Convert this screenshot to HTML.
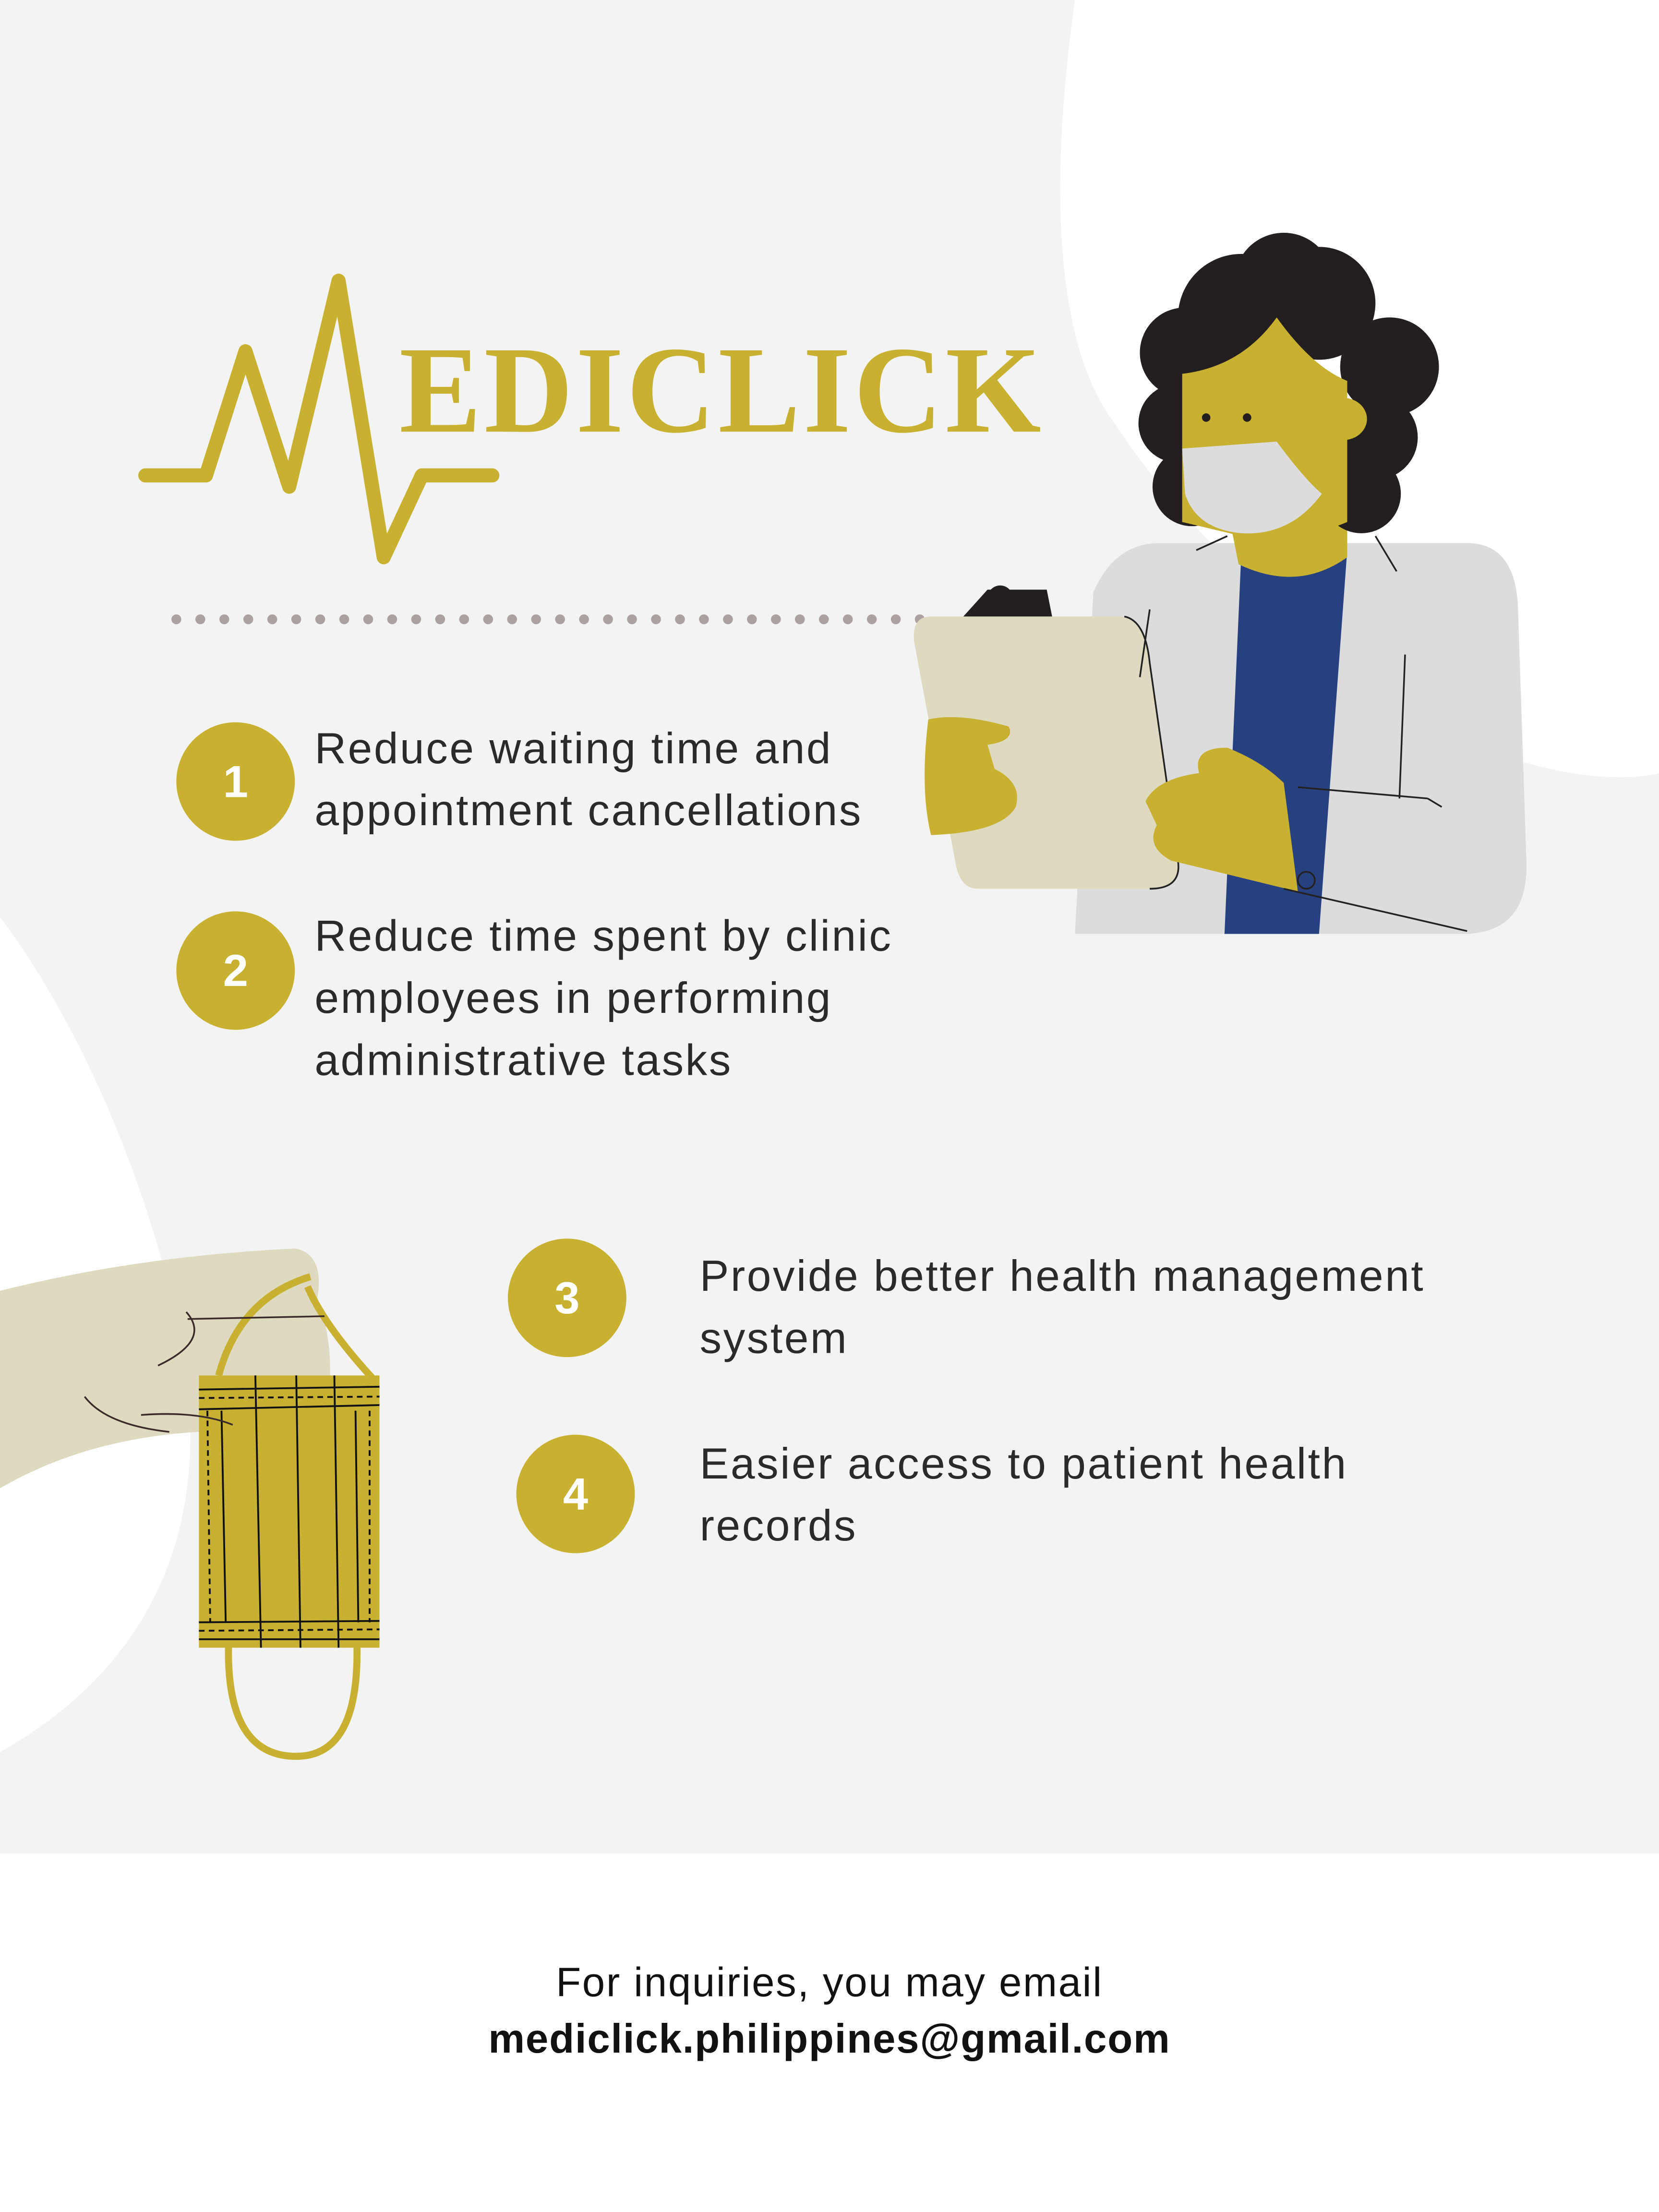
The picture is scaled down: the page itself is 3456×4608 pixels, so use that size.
<!DOCTYPE html>
<html><head><meta charset="utf-8"><style>
html,body{margin:0;padding:0;background:#fff;}
body{width:3456px;height:4608px;overflow:hidden;position:relative;}
#s{position:absolute;left:0;top:0;width:1176px;height:1568px;transform:scale(2.938776);transform-origin:0 0;font-family:"Liberation Sans",sans-serif;}
.t{position:absolute;font-size:31px;line-height:44px;color:#2a2a2a;letter-spacing:1.2px;}
.c{position:absolute;width:84px;height:84px;border-radius:50%;background:#c8b030;color:#fff;font-weight:bold;font-size:32px;line-height:84px;text-align:center;}
</style></head><body><div id="s">
<svg width="1176" height="1568" style="position:absolute;left:0;top:0">
<rect x="0" y="0" width="1176" height="1314" fill="#f3f3f3"/>
<path d="M762,0 C745,120 745,240 790,300 C850,390 940,470 1050,530 C1100,550 1150,555 1176,548 L1176,0 Z" fill="#fff"/>
<path d="M0,650 C60,730 110,850 130,960 C150,1080 110,1180 0,1242 Z" fill="#fff"/>
<polyline points="103,337 146,337 174,249 205,345 240,199 272,395 299,337 349,337" fill="none" stroke="#c8b030" stroke-width="10" stroke-linejoin="round" stroke-linecap="round"/>
<text x="283" y="306" font-family="Liberation Serif,serif" font-weight="bold" font-size="88" fill="#c8b030" letter-spacing="2" textLength="457" lengthAdjust="spacingAndGlyphs">EDICLICK</text>
<line x1="125" y1="439" x2="660" y2="439" stroke="#aca1a1" stroke-width="7" stroke-linecap="round" stroke-dasharray="0 17"/>
<!-- doctor -->
<path d="M822,385 L1040,385 Q1074,385 1076,430 L1082,610 Q1084,660 1040,662 L762,662 L775,420 Q790,385 822,385 Z" fill="#dcdcdc"/>
<path d="M880,390 L955,390 L935,662 L868,662 Z" fill="#27407f"/>
<path d="M868,350 L955,350 L955,395 Q920,420 878,400 Z" fill="#c8b030"/>
<g fill="#231f20">
<circle cx="880" cy="225" r="45"/><circle cx="935" cy="215" r="40"/><circle cx="985" cy="260" r="35"/><circle cx="975" cy="310" r="30"/><circle cx="965" cy="350" r="28"/><circle cx="840" cy="250" r="32"/><circle cx="835" cy="300" r="28"/><circle cx="845" cy="345" r="28"/><circle cx="910" cy="200" r="35"/>
</g>
<path d="M838,265 Q880,260 905,225 Q930,260 955,270 L955,370 Q920,385 880,380 L838,370 Z" fill="#c8b030"/>
<ellipse cx="952" cy="297" rx="17" ry="15" fill="#c8b030"/>
<path d="M838,318 L905,313 Q925,340 937,350 Q915,380 880,378 Q848,375 840,350 Z" fill="#dcdcdc"/>
<circle cx="855" cy="296" r="3" fill="#231f20"/><circle cx="884" cy="296" r="3" fill="#231f20"/>
<path d="M700,418 L742,418 L746,438 L682,438 Z" fill="#231f20"/><circle cx="709" cy="424" r="9" fill="#231f20"/>
<path d="M660,437 L795,437 Q812,440 815,470 L835,610 Q838,630 815,630 L693,630 Q680,630 677,610 L648,455 Q646,437 660,437 Z" fill="#dedac0"/>
<path d="M797,437 Q812,440 815,470 L835,610 Q838,630 815,630" fill="none" stroke="#222" stroke-width="1.2"/>
<path d="M658,510 Q680,505 715,515 Q720,525 700,528 L705,545 Q725,555 720,572 Q710,590 660,592 Q652,560 658,510 Z" fill="#c8b030"/>
<path d="M910,555 L920,632 L830,610 Q812,600 820,585 L812,568 Q820,552 850,548 Q845,530 870,530 Q895,540 910,555 Z" fill="#c8b030"/>
<g stroke="#222" stroke-width="1.2" fill="none">
<line x1="920" y1="558" x2="1012" y2="566"/><line x1="1012" y1="566" x2="1022" y2="572"/><line x1="996" y1="464" x2="992" y2="566"/>
<line x1="910" y1="630" x2="1040" y2="660"/><line x1="815" y1="432" x2="808" y2="480"/>
<circle cx="926" cy="624" r="6"/>
<path d="M848,390 L870,380 M975,380 L990,405"/>
</g>
<!-- hand with mask -->
<path d="M0,915 Q100,890 210,885 Q230,890 225,920 Q240,960 230,1010 L140,1015 Q60,1020 0,1055 Z" fill="#dedac0"/>
<path d="M155,975 Q170,920 220,905 M218,912 Q230,940 265,978" fill="none" stroke="#c8b030" stroke-width="5"/>
<path d="M162,1165 Q160,1245 210,1245 Q255,1245 253,1165" fill="none" stroke="#c8b030" stroke-width="5"/>
<rect x="141" y="975" width="128" height="193" fill="#c8b030"/>
<g stroke="#111" stroke-width="1.3" fill="none">
<line x1="141" y1="985" x2="269" y2="983"/><line x1="141" y1="999" x2="269" y2="996"/>
<line x1="141" y1="1150" x2="269" y2="1149"/><line x1="141" y1="1162" x2="269" y2="1162"/>
<line x1="181" y1="975" x2="185" y2="1168"/><line x1="210" y1="975" x2="213" y2="1168"/><line x1="237" y1="975" x2="240" y2="1168"/>
<line x1="157" y1="1000" x2="160" y2="1150"/><line x1="252" y1="1000" x2="254" y2="1150"/>
<line x1="147" y1="1000" x2="149" y2="1150" stroke-dasharray="4 3"/><line x1="262" y1="1000" x2="262" y2="1150" stroke-dasharray="4 3"/>
<line x1="141" y1="991" x2="269" y2="990" stroke-dasharray="4 3"/><line x1="141" y1="1156" x2="269" y2="1155" stroke-dasharray="4 3"/>
</g>
<g stroke="#3a2a2a" stroke-width="1.2" fill="none">
<path d="M112,968 Q150,950 132,930 M100,1003 Q140,1000 165,1010 M60,990 Q75,1010 120,1015 M133,935 L230,933"/>
</g>
</svg>
<div class="c" style="left:125px;top:512px">1</div>
<div class="c" style="left:125px;top:646px">2</div>
<div class="c" style="left:360px;top:878px">3</div>
<div class="c" style="left:366px;top:1017px">4</div>
<div class="t" style="left:223px;top:509px">Reduce waiting time and<br>appointment cancellations</div>
<div class="t" style="left:223px;top:642px">Reduce time spent by clinic<br>employees in performing<br>administrative tasks</div>
<div class="t" style="left:496px;top:883px">Provide better health management<br>system</div>
<div class="t" style="left:496px;top:1016px">Easier access to patient health<br>records</div>
<div style="position:absolute;left:0;width:1176px;top:1386px;text-align:center;font-size:29px;color:#111;line-height:40px;letter-spacing:0.9px">For inquiries, you may email<br><b style="letter-spacing:0.6px">mediclick.philippines@gmail.com</b></div>
</div></body></html>
